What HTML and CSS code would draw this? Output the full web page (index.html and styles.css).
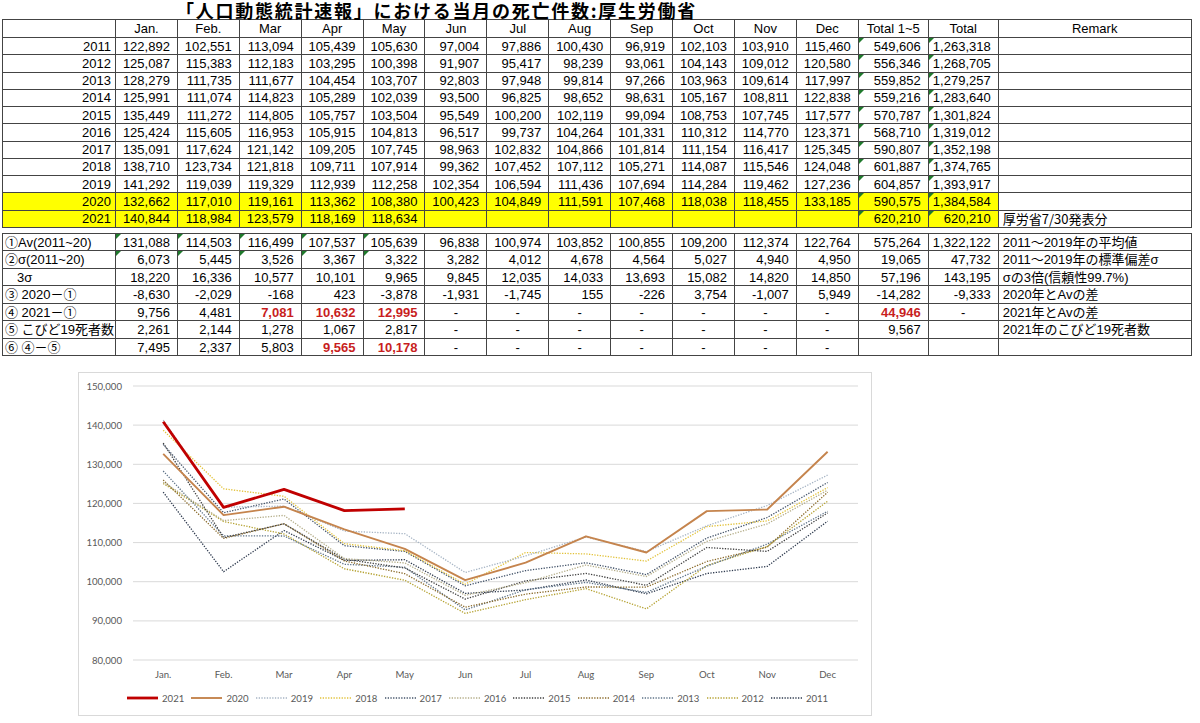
FILE: index.html
```html
<!DOCTYPE html>
<html lang="ja">
<head>
<meta charset="utf-8">
<title>人口動態統計速報 当月の死亡件数</title>
<link rel="stylesheet" href="styles.css">
</head>
<body>
<div class="page">
<h1 class="title">「人口動態統計速報」における当月の死亡件数:厚生労働省</h1>
<table class="sheet">
<colgroup><col class="c-yr"><col class="c-m"><col class="c-m"><col class="c-m"><col class="c-m"><col class="c-m"><col class="c-m"><col class="c-m"><col class="c-m"><col class="c-m"><col class="c-m"><col class="c-m"><col class="c-m"><col class="c-t"><col class="c-t"><col class="c-r"></colgroup>
<thead>
<tr><th></th><th>Jan.</th><th>Feb.</th><th>Mar</th><th>Apr</th><th>May</th><th>Jun</th><th>Jul</th><th>Aug</th><th>Sep</th><th>Oct</th><th>Nov</th><th>Dec</th><th>Total 1~5</th><th>Total</th><th>Remark</th></tr>
</thead>
<tbody>
<tr><td class="yr">2011</td><td>122,892</td><td>102,551</td><td>113,094</td><td>105,439</td><td>105,630</td><td>97,004</td><td>97,886</td><td>100,430</td><td>96,919</td><td>102,103</td><td>103,910</td><td>115,460</td><td class="g">549,606</td><td class="g">1,263,318</td><td class="rm"></td></tr>
<tr><td class="yr">2012</td><td>125,087</td><td>115,383</td><td>112,183</td><td>103,295</td><td>100,398</td><td>91,907</td><td>95,417</td><td>98,239</td><td>93,061</td><td>104,143</td><td>109,012</td><td>120,580</td><td class="g">556,346</td><td class="g">1,268,705</td><td class="rm"></td></tr>
<tr><td class="yr">2013</td><td>128,279</td><td>111,735</td><td>111,677</td><td>104,454</td><td>103,707</td><td>92,803</td><td>97,948</td><td>99,814</td><td>97,266</td><td>103,963</td><td>109,614</td><td>117,997</td><td class="g">559,852</td><td class="g">1,279,257</td><td class="rm"></td></tr>
<tr><td class="yr">2014</td><td>125,991</td><td>111,074</td><td>114,823</td><td>105,289</td><td>102,039</td><td>93,500</td><td>96,825</td><td>98,652</td><td>98,631</td><td>105,167</td><td>108,811</td><td>122,838</td><td class="g">559,216</td><td class="g">1,283,640</td><td class="rm"></td></tr>
<tr><td class="yr">2015</td><td>135,449</td><td>111,272</td><td>114,805</td><td>105,757</td><td>103,504</td><td>95,549</td><td>100,200</td><td>102,119</td><td>99,094</td><td>108,753</td><td>107,745</td><td>117,577</td><td class="g">570,787</td><td class="g">1,301,824</td><td class="rm"></td></tr>
<tr><td class="yr">2016</td><td>125,424</td><td>115,605</td><td>116,953</td><td>105,915</td><td>104,813</td><td>96,517</td><td>99,737</td><td>104,264</td><td>101,331</td><td>110,312</td><td>114,770</td><td>123,371</td><td class="g">568,710</td><td class="g">1,319,012</td><td class="rm"></td></tr>
<tr><td class="yr">2017</td><td>135,091</td><td>117,624</td><td>121,142</td><td>109,205</td><td>107,745</td><td>98,963</td><td>102,832</td><td>104,866</td><td>101,814</td><td>111,154</td><td>116,417</td><td>125,345</td><td class="g">590,807</td><td class="g">1,352,198</td><td class="rm"></td></tr>
<tr><td class="yr">2018</td><td>138,710</td><td>123,734</td><td>121,818</td><td>109,711</td><td>107,914</td><td>99,362</td><td>107,452</td><td>107,112</td><td>105,271</td><td>114,087</td><td>115,546</td><td>124,048</td><td class="g">601,887</td><td class="g">1,374,765</td><td class="rm"></td></tr>
<tr><td class="yr">2019</td><td>141,292</td><td>119,039</td><td>119,329</td><td>112,939</td><td>112,258</td><td>102,354</td><td>106,594</td><td>111,436</td><td>107,694</td><td>114,284</td><td>119,462</td><td>127,236</td><td class="g">604,857</td><td class="g">1,393,917</td><td class="rm"></td></tr>
<tr class="hl"><td class="yr">2020</td><td>132,662</td><td>117,010</td><td>119,161</td><td>113,362</td><td>108,380</td><td>100,423</td><td>104,849</td><td>111,591</td><td>107,468</td><td>118,038</td><td>118,455</td><td>133,185</td><td class="g">590,575</td><td class="g">1,384,584</td><td class="rm"></td></tr>
<tr class="hl"><td class="yr">2021</td><td>140,844</td><td>118,984</td><td>123,579</td><td>118,169</td><td>118,634</td><td></td><td></td><td></td><td></td><td></td><td></td><td></td><td class="g">620,210</td><td class="g">620,210</td><td class="rm">厚労省<span class="jp">7/30</span>発表分</td></tr>
</tbody>
</table>

<table class="sheet stats">
<colgroup><col class="c-yr"><col class="c-m"><col class="c-m"><col class="c-m"><col class="c-m"><col class="c-m"><col class="c-m"><col class="c-m"><col class="c-m"><col class="c-m"><col class="c-m"><col class="c-m"><col class="c-m"><col class="c-t"><col class="c-t"><col class="c-r"></colgroup>
<tbody>
<tr><td class="lbl">①Av(2011~20)</td><td class="g">131,088</td><td class="g">114,503</td><td class="g">116,499</td><td class="g">107,537</td><td class="g">105,639</td><td>96,838</td><td>100,974</td><td>103,852</td><td>100,855</td><td>109,200</td><td>112,374</td><td>122,764</td><td>575,264</td><td>1,322,122</td><td class="rm">2011～2019年の平均値</td></tr>
<tr><td class="lbl">②σ(2011~20)</td><td class="g">6,073</td><td class="g">5,445</td><td class="g">3,526</td><td class="g">3,367</td><td class="g">3,322</td><td>3,282</td><td>4,012</td><td>4,678</td><td>4,564</td><td>5,027</td><td>4,940</td><td>4,950</td><td>19,065</td><td>47,732</td><td class="rm">2011～2019年の標準偏差σ</td></tr>
<tr><td class="lbl ind">3σ</td><td>18,220</td><td>16,336</td><td>10,577</td><td>10,101</td><td>9,965</td><td>9,845</td><td>12,035</td><td>14,033</td><td>13,693</td><td>15,082</td><td>14,820</td><td>14,850</td><td>57,196</td><td>143,195</td><td class="rm">σの3倍(信頼性99.7%)</td></tr>
<tr><td class="lbl">③ 2020－①</td><td>-8,630</td><td>-2,029</td><td>-168</td><td>423</td><td>-3,878</td><td>-1,931</td><td>-1,745</td><td>155</td><td>-226</td><td>3,754</td><td>-1,007</td><td>5,949</td><td>-14,282</td><td>-9,333</td><td class="rm">2020年とAvの差</td></tr>
<tr><td class="lbl">④ 2021－①</td><td>9,756</td><td>4,481</td><td class="red">7,081</td><td class="red">10,632</td><td class="red">12,995</td><td class="c">-</td><td class="c">-</td><td class="c">-</td><td class="c">-</td><td class="c">-</td><td class="c">-</td><td class="c">-</td><td class="red">44,946</td><td class="c">-</td><td class="rm">2021年とAvの差</td></tr>
<tr><td class="lbl">⑤ こびど19死者数</td><td>2,261</td><td>2,144</td><td>1,278</td><td>1,067</td><td>2,817</td><td class="c">-</td><td class="c">-</td><td class="c">-</td><td class="c">-</td><td class="c">-</td><td class="c">-</td><td class="c">-</td><td>9,567</td><td></td><td class="rm">2021年のこびど19死者数</td></tr>
<tr><td class="lbl">⑥ ④－⑤</td><td>7,495</td><td>2,337</td><td>5,803</td><td class="red">9,565</td><td class="red">10,178</td><td class="c">-</td><td class="c">-</td><td class="c">-</td><td class="c">-</td><td class="c">-</td><td class="c">-</td><td class="c">-</td><td></td><td></td><td class="rm"></td></tr>
</tbody>
</table>

<div class="chart">
<svg class="plot" width="792" height="312" viewBox="0 0 792 312">
<g class="grid">
<line x1="54" x2="779" y1="13" y2="13"/>
<line x1="54" x2="779" y1="52.1" y2="52.1"/>
<line x1="54" x2="779" y1="91.3" y2="91.3"/>
<line x1="54" x2="779" y1="130.4" y2="130.4"/>
<line x1="54" x2="779" y1="169.6" y2="169.6"/>
<line x1="54" x2="779" y1="208.7" y2="208.7"/>
<line x1="54" x2="779" y1="247.9" y2="247.9"/>
<line x1="54" x2="779" y1="287" y2="287"/>
</g>
<g class="ylab">
<text x="43" y="16.5">150,000</text>
<text x="43" y="55.6">140,000</text>
<text x="43" y="94.8">130,000</text>
<text x="43" y="133.9">120,000</text>
<text x="43" y="173.1">110,000</text>
<text x="43" y="212.2">100,000</text>
<text x="43" y="251.4">90,000</text>
<text x="43" y="290.5">80,000</text>
</g>
<g class="xlab">
<text x="84.2" y="305">Jan.</text>
<text x="144.6" y="305">Feb.</text>
<text x="205" y="305">Mar</text>
<text x="265.4" y="305">Apr</text>
<text x="325.8" y="305">May</text>
<text x="386.2" y="305">Jun</text>
<text x="446.6" y="305">Jul</text>
<text x="507" y="305">Aug</text>
<text x="567.4" y="305">Sep</text>
<text x="627.8" y="305">Oct</text>
<text x="688.2" y="305">Nov</text>
<text x="748.6" y="305">Dec</text>
</g>
<g class="series">
<polyline class="s2011" data-v="122892 102551 113094 105439 105630 97004 97886 100430 96919 102103 103910 115460"/>
<polyline class="s2012" data-v="125087 115383 112183 103295 100398 91907 95417 98239 93061 104143 109012 120580"/>
<polyline class="s2013" data-v="128279 111735 111677 104454 103707 92803 97948 99814 97266 103963 109614 117997"/>
<polyline class="s2014" data-v="125991 111074 114823 105289 102039 93500 96825 98652 98631 105167 108811 122838"/>
<polyline class="s2015" data-v="135449 111272 114805 105757 103504 95549 100200 102119 99094 108753 107745 117577"/>
<polyline class="s2016" data-v="125424 115605 116953 105915 104813 96517 99737 104264 101331 110312 114770 123371"/>
<polyline class="s2017" data-v="135091 117624 121142 109205 107745 98963 102832 104866 101814 111154 116417 125345"/>
<polyline class="s2018" data-v="138710 123734 121818 109711 107914 99362 107452 107112 105271 114087 115546 124048"/>
<polyline class="s2019" data-v="141292 119039 119329 112939 112258 102354 106594 111436 107694 114284 119462 127236"/>
<polyline class="s2020" data-v="132662 117010 119161 113362 108380 100423 104849 111591 107468 118038 118455 133185"/>
<polyline class="s2021" data-v="140844 118984 123579 118169 118634"/>
</g>
</svg>
<div class="legend">
<div class="li"><svg width="31" height="6"><line class="s2021" x1="0" x2="31" y1="3" y2="3"/></svg><span>2021</span></div>
<div class="li"><svg width="31" height="6"><line class="s2020" x1="0" x2="31" y1="3" y2="3"/></svg><span>2020</span></div>
<div class="li"><svg width="31" height="6"><line class="s2019" x1="0" x2="31" y1="3" y2="3"/></svg><span>2019</span></div>
<div class="li"><svg width="31" height="6"><line class="s2018" x1="0" x2="31" y1="3" y2="3"/></svg><span>2018</span></div>
<div class="li"><svg width="31" height="6"><line class="s2017" x1="0" x2="31" y1="3" y2="3"/></svg><span>2017</span></div>
<div class="li"><svg width="31" height="6"><line class="s2016" x1="0" x2="31" y1="3" y2="3"/></svg><span>2016</span></div>
<div class="li"><svg width="31" height="6"><line class="s2015" x1="0" x2="31" y1="3" y2="3"/></svg><span>2015</span></div>
<div class="li"><svg width="31" height="6"><line class="s2014" x1="0" x2="31" y1="3" y2="3"/></svg><span>2014</span></div>
<div class="li"><svg width="31" height="6"><line class="s2013" x1="0" x2="31" y1="3" y2="3"/></svg><span>2013</span></div>
<div class="li"><svg width="31" height="6"><line class="s2012" x1="0" x2="31" y1="3" y2="3"/></svg><span>2012</span></div>
<div class="li"><svg width="31" height="6"><line class="s2011" x1="0" x2="31" y1="3" y2="3"/></svg><span>2011</span></div>
</div>
</div>
</div>
<script src="script.js"></script>
</body>
</html>
```

FILE: styles.css
```css
* { box-sizing: border-box; }
html, body { background: #fff; }
body {
  margin: 0;
  color: #000;
  font-family: "Liberation Sans", Arial, "Noto Sans CJK JP", sans-serif;
}
.page { padding: 0 2px; }

.title {
  margin: 0;
  height: 19px;
  padding: 1px 0 0 174px;
  font: 700 18px/18px "Noto Sans CJK JP", sans-serif;
  letter-spacing: 1.75px;
  white-space: nowrap;
}

.sheet {
  border-collapse: collapse;
  table-layout: fixed;
  width: 1189px;
  font-size: 13px;
  line-height: 15px;
}
.c-yr { width: 113px; }
.c-m { width: 61.9px; }
.c-t { width: 70px; }
.c-r { width: 193px; }

.sheet th,
.sheet td {
  border: 1px solid #444;
  padding: 0 7px 0 2px;
  text-align: right;
  font-weight: 400;
  white-space: nowrap;
  position: relative;
  overflow: hidden;
  height: 17.27px;
}
.sheet th {
  text-align: center;
  padding: 0;
  height: 18px;
}
.sheet td.yr { padding-right: 4px; }
.sheet td.lbl { text-align: left; padding-left: 2px; padding-right: 0; }
.sheet td.ind { padding-left: 14px; }
.sheet td.c { text-align: center; padding: 0; }
.sheet td.rm { text-align: left; padding-left: 4px; padding-right: 0; }
.jp { font-family: "Noto Sans CJK JP", sans-serif; }
.sheet td.red { color: #c81e1e; font-weight: 700; }

.hl td { background: #ffff00; }
.hl td.rm { background: #fff; }

.sheet td.g::before {
  content: "";
  position: absolute;
  top: 0;
  left: 0;
  border-top: 5px solid #1f7a2c;
  border-right: 5px solid transparent;
}

.stats { margin-top: 5px; }
.stats td { height: 17.5px; }

/* chart */
.chart {
  margin: 16px 0 0 76px;
  width: 794px;
  height: 344px;
  border: 1px solid #d9d9d9;
  background: #fff;
  display: flex;
  flex-direction: column;
}
.plot { display: block; flex: none; }
.grid line { stroke: #d9d9d9; stroke-width: 1; }
.ylab text,
.xlab text {
  font-family: Lato, "Open Sans", sans-serif;
  font-size: 9.6px;
  fill: #595959;
}
.ylab text { text-anchor: end; }
.xlab text { text-anchor: middle; }

.series polyline { fill: none; stroke-linejoin: round; }

.s2021 { stroke: #c00000; stroke-width: 2.8; fill: none; }
.s2020 { stroke: #c5844d; stroke-width: 1.9; fill: none; }
.s2019, .s2018, .s2017, .s2016, .s2015, .s2014, .s2013, .s2012, .s2011 {
  stroke-width: 1.3;
  stroke-dasharray: 1.3 1.4;
  fill: none;
}
.s2019 { stroke: #a6b4c4; }
.s2018 { stroke: #e2c23a; }
.s2017 { stroke: #44546a; }
.s2016 { stroke: #b4ad88; }
.s2015 { stroke: #3f3f3f; }
.s2014 { stroke: #8a6a2a; }
.s2013 { stroke: #5e7388; }
.s2012 { stroke: #b5a232; }
.s2011 { stroke: #2f3b4f; }

.legend {
  display: flex;
  align-items: center;
  height: 26px;
  padding-left: 48px;
}
.li {
  flex: none;
  width: 64.4px;
  display: flex;
  align-items: center;
  gap: 4px;
  font: 9.6px Lato, "Open Sans", sans-serif;
  color: #595959;
}
.li svg { display: block; flex: none; }
```

FILE: script.js
```js
(function () {
  var lines = document.querySelectorAll('.plot polyline[data-v]');
  for (var k = 0; k < lines.length; k++) {
    var p = lines[k];
    var vals = p.getAttribute('data-v').split(' ');
    var pts = [];
    for (var i = 0; i < vals.length; i++) {
      var x = 84.2 + 60.4 * i;
      var y = 287 - (Number(vals[i]) - 80000) * 274 / 70000;
      pts.push(x.toFixed(1) + ',' + y.toFixed(1));
    }
    p.setAttribute('points', pts.join(' '));
  }
})();
```
